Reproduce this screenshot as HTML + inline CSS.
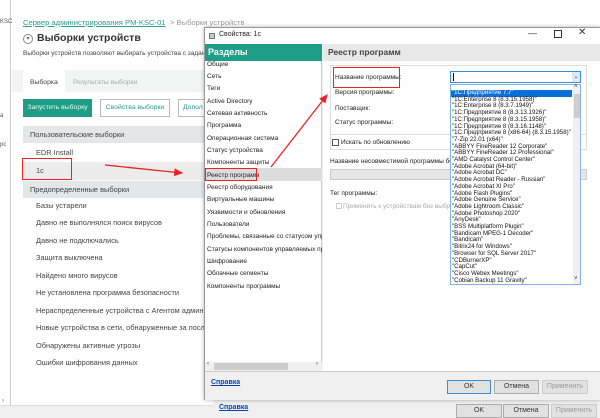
<!DOCTYPE html>
<html><head><meta charset="utf-8"><style>
*{margin:0;padding:0;box-sizing:border-box}
body{width:600px;height:418px;overflow:hidden;background:#fff;font-family:"Liberation Sans","Noto Sans CJK SC",sans-serif;position:relative;color:#333}
.a{position:absolute;white-space:nowrap}
.m{font-size:7.4px;color:#444}
.d{font-size:6.5px;color:#222}
.li{font-size:6.1px;color:#111;left:452px;height:6.7px;line-height:6.7px}
.btn{position:absolute;border:1px solid #adadad;background:#e1e1e1;font-size:7px;text-align:center;line-height:12px;height:14px}
</style></head><body>
<div class="a" style="left:0;top:0;width:11px;height:405px;border-right:1px solid #ccc;background:#fff"></div>
<div class="a" style="left:0;top:19px;font-size:6px;color:#555">KSC</div>
<div class="a" style="left:0;top:113px;font-size:6px;color:#555">а</div>
<div class="a" style="left:0;top:142px;font-size:6px;color:#555">рс</div>
<div class="a" style="left:2px;top:398px;font-size:6px;color:#555">›</div>
<div class="a" style="left:23px;top:18px;font-size:7.6px;color:#2a9d8f;text-decoration:underline">Сервер администрирования PM-KSC-01</div>
<div class="a" style="left:170px;top:18px;font-size:7.6px;color:#999">&gt; Выборки устройств</div>
<div class="a" style="left:23px;top:34px;width:10px;height:10px;border:1px solid #888;border-radius:50%;font-size:6px;text-align:center;line-height:8px;color:#666">▾</div>
<div class="a" style="left:37px;top:32px;font-size:10.5px;font-weight:bold;color:#333">Выборки устройств</div>
<div class="a" style="left:23px;top:50px;font-size:6.5px;color:#444">Выборки устройств позволяют выбирать устройства с задан</div>
<div class="a" style="left:12px;top:70px;width:192px;height:22px;background:#f2f4f4"></div>
<div class="a" style="left:23px;top:70px;width:42px;height:22px;background:#fff"></div>
<div class="a" style="left:30px;top:79px;font-size:6.8px;color:#444">Выборка</div>
<div class="a" style="left:73px;top:79px;font-size:6.8px;color:#aaa">Результаты выборки</div>
<div class="a" style="left:23px;top:99px;width:69px;height:18px;background:#1e9e87;color:#e9f7f3;font-size:6.8px;text-align:center;line-height:18px">Запустить выборку</div>
<div class="a" style="left:100px;top:99px;width:70px;height:18px;border:1px solid #bbb;color:#2a9d8f;font-size:6.8px;text-align:center;line-height:16px">Свойства выборки</div>
<div class="a" style="left:178px;top:99px;width:30px;height:18px;border:1px solid #bbb;color:#2a9d8f;font-size:6.8px;line-height:16px;padding-left:4px;overflow:hidden">Допол</div>
<div class="a" style="left:23px;top:126px;width:181px;height:17px;background:#e3e7e9"></div>
<div class="a m" style="left:30px;top:130px">Пользовательские выборки</div>
<div class="a m" style="left:36px;top:148px">EDR Install</div>
<div class="a" style="left:23px;top:162px;width:181px;height:18px;background:#ececec"></div>
<div class="a m" style="left:36px;top:166px">1c</div>
<div class="a" style="left:22px;top:158px;width:50px;height:22px;border:1.5px solid #e22"></div>
<div class="a" style="left:23px;top:181px;width:181px;height:17px;background:#e3e7e9"></div>
<div class="a m" style="left:30px;top:185px">Предопределенные выборки</div>
<div class="a m" style="left:36px;top:201px">Базы устарели</div>
<div class="a m" style="left:36px;top:218px">Давно не выполнялся поиск вирусов</div>
<div class="a m" style="left:36px;top:236px">Давно не подключались</div>
<div class="a m" style="left:36px;top:253px">Защита выключена</div>
<div class="a m" style="left:36px;top:271px">Найдено много вирусов</div>
<div class="a m" style="left:36px;top:288px">Не установлена программа безопасности</div>
<div class="a m" style="left:36px;top:306px">Нераспределенные устройства с Агентом админи</div>
<div class="a m" style="left:36px;top:323px">Новые устройства в сети, обнаруженные за после</div>
<div class="a m" style="left:36px;top:341px">Обнаружены активные угрозы</div>
<div class="a m" style="left:36px;top:358px">Ошибки шифрования данных</div>
<div class="a" style="left:0;top:405px;width:600px;height:13px;background:#f0f0f0;border-top:1px solid #ddd"></div>
<div class="a" style="left:213px;top:400px;width:387px;height:18px;background:#f0f0f0"></div>
<div class="a" style="left:219px;top:404px;font-size:7px;color:#0645ad;text-decoration:underline;font-weight:bold">Справка</div>
<div class="btn" style="left:456px;top:404px;width:46px">OK</div>
<div class="btn" style="left:503px;top:404px;width:46px">Отмена</div>
<div class="btn" style="left:551px;top:404px;width:46px;color:#999;border-color:#ccc">Применить</div>
<div class="a" style="left:204px;top:27px;width:396px;height:373px;background:#f0f0f0;border:1px solid #999;box-shadow:0 0 4px rgba(0,0,0,.3)"></div>
<div class="a" style="left:205px;top:28px;width:395px;height:16px;background:#fff"></div>
<div class="a" style="left:209px;top:33px;width:6px;height:6px;border:1px solid #777;background:#bcd"></div>
<div class="a" style="left:219px;top:31px;font-size:7px;color:#222">Свойства: 1с</div>
<div class="a" style="left:528px;top:28px;font-size:9px;color:#333">—</div>
<div class="a" style="left:554px;top:30px;width:8px;height:8px;border:1px solid #333"></div>
<div class="a" style="left:578px;top:27px;font-size:10px;color:#333">✕</div>
<div class="a" style="left:205px;top:44px;width:117px;height:327px;background:#fff;border-right:1px solid #ccc"></div>
<div class="a" style="left:205px;top:44px;width:117px;height:17px;background:#1e9e87;color:#fff;font-size:9px;font-weight:bold;line-height:17px;padding-left:3px">Разделы</div>
<div class="a" style="left:205px;top:168px;width:117px;height:13px;background:#dcdcdc"></div>
<div class="a d" style="left:207px;top:61px">Общие</div>
<div class="a d" style="left:207px;top:73px">Сеть</div>
<div class="a d" style="left:207px;top:85px">Теги</div>
<div class="a d" style="left:207px;top:98px">Active Directory</div>
<div class="a d" style="left:207px;top:110px">Сетевая активность</div>
<div class="a d" style="left:207px;top:122px">Программа</div>
<div class="a d" style="left:207px;top:135px">Операционная система</div>
<div class="a d" style="left:207px;top:147px">Статус устройства</div>
<div class="a d" style="left:207px;top:159px">Компоненты защиты</div>
<div class="a d" style="left:207px;top:172px">Реестр программ</div>
<div class="a" style="left:205px;top:168px;width:52px;height:13px;border:1.5px solid #e22"></div>
<div class="a d" style="left:207px;top:184px">Реестр оборудования</div>
<div class="a d" style="left:207px;top:196px">Виртуальные машины</div>
<div class="a d" style="left:207px;top:209px">Уязвимости и обновления</div>
<div class="a d" style="left:207px;top:221px">Пользователи</div>
<div class="a d" style="left:207px;top:233px;width:115px;overflow:hidden">Проблемы, связанные со статусом управле</div>
<div class="a d" style="left:207px;top:246px;width:115px;overflow:hidden">Статусы компонентов управляемых програ</div>
<div class="a d" style="left:207px;top:258px">Шифрование</div>
<div class="a d" style="left:207px;top:270px">Облачные сегменты</div>
<div class="a d" style="left:207px;top:283px">Компоненты программы</div>
<div class="a" style="left:205px;top:362px;width:117px;height:9px;background:#f0f0f0"></div>
<div class="a" style="left:214px;top:363px;width:74px;height:7px;background:#cdcdcd"></div>
<div class="a" style="left:207px;top:361px;font-size:6px">‹</div>
<div class="a" style="left:316px;top:361px;font-size:6px">›</div>
<div class="a" style="left:323px;top:44px;width:277px;height:327px;background:#fff"></div>
<div class="a" style="left:323px;top:44px;width:277px;height:17px;background:#e8e8e8;font-size:8.5px;font-weight:bold;color:#444;line-height:17px;padding-left:5px">Реестр программ</div>
<div class="a" style="left:330px;top:65px;width:257px;height:70px;border:1px solid #ddd"></div>
<div class="a d" style="left:335px;top:74px">Название программы:</div>
<div class="a" style="left:333px;top:67px;width:67px;height:21px;border:1.5px solid #e22"></div>
<div class="a d" style="left:335px;top:89px">Версия программы:</div>
<div class="a d" style="left:335px;top:105px">Поставщик:</div>
<div class="a d" style="left:335px;top:119px">Статус программы:</div>
<div class="a" style="left:330px;top:135px;width:257px;height:15px;border:1px solid #ddd;border-top:none"></div>
<div class="a" style="left:332px;top:139px;width:7px;height:7px;border:1px solid #555"></div>
<div class="a d" style="left:341px;top:139px">Искать по обновлению</div>
<div class="a d" style="left:330px;top:158px">Название несовместимой программы безопасн</div>
<div class="a" style="left:330px;top:169px;width:257px;height:11px;background:#e6e6e6;border:1px solid #ccc"></div>
<div class="a d" style="left:330px;top:190px">Тег программы:</div>
<div class="a" style="left:336px;top:203px;width:6px;height:6px;border:1px solid #ccc"></div>
<div class="a d" style="left:343px;top:203px;color:#aaa">Применить к устройствам без выбранн</div>
<div class="a" style="left:450px;top:71px;width:131px;height:12px;border:1px solid #3b8fd9;background:#fff"></div>
<div class="a" style="left:453px;top:73px;width:1px;height:8px;background:#000"></div>
<div class="a" style="left:572px;top:72px;width:8px;height:10px;background:#dde9f5;font-size:6px;text-align:center;line-height:10px;color:#333">⌄</div>
<div class="a" style="left:450px;top:84px;width:131px;height:201px;border:1px solid #7eb4ea;background:#fff;overflow:hidden"></div>
<div class="a" style="left:573px;top:85px;width:7px;height:199px;background:#f0f0f0"></div>
<div class="a" style="left:574px;top:94px;width:6px;height:24px;background:#cdcdcd"></div>
<div class="a" style="left:451px;top:90px;width:121px;height:6.7px;background:#0a6fd6"></div>
<div class="a li" style="top:90px;color:#fff">"1C:Предприятие 7.7"</div>
<div class="a li" style="top:96.7px">"1C:Enterprise 8 (8.3.15.1958)"</div>
<div class="a li" style="top:103.4px">"1C:Enterprise 8 (8.3.7.1949)"</div>
<div class="a li" style="top:110.1px">"1C:Предприятие 8 (8.3.13.1926)"</div>
<div class="a li" style="top:116.8px">"1C:Предприятие 8 (8.3.15.1958)"</div>
<div class="a li" style="top:123.5px">"1C:Предприятие 8 (8.3.16.1148)"</div>
<div class="a li" style="top:130.2px">"1C:Предприятие 8 (x86-64) (8.3.15.1958)"</div>
<div class="a li" style="top:136.9px">"7-Zip 22.01 (x64)"</div>
<div class="a li" style="top:143.6px">"ABBYY FineReader 12 Corporate"</div>
<div class="a li" style="top:150.3px">"ABBYY FineReader 12 Professional"</div>
<div class="a li" style="top:157px">"AMD Catalyst Control Center"</div>
<div class="a li" style="top:163.7px">"Adobe Acrobat (64-bit)"</div>
<div class="a li" style="top:170.4px">"Adobe Acrobat DC"</div>
<div class="a li" style="top:177.1px">"Adobe Acrobat Reader - Russian"</div>
<div class="a li" style="top:183.8px">"Adobe Acrobat XI Pro"</div>
<div class="a li" style="top:190.5px">"Adobe Flash Plugins"</div>
<div class="a li" style="top:197.2px">"Adobe Genuine Service"</div>
<div class="a li" style="top:203.9px">"Adobe Lightroom Classic"</div>
<div class="a li" style="top:210.6px">"Adobe Photoshop 2020"</div>
<div class="a li" style="top:217.3px">"AnyDesk"</div>
<div class="a li" style="top:224px">"BSS Multiplatform Plugin"</div>
<div class="a li" style="top:230.7px">"Bandicam MPEG-1 Decoder"</div>
<div class="a li" style="top:237.4px">"Bandicam"</div>
<div class="a li" style="top:244.1px">"Bitrix24 for Windows"</div>
<div class="a li" style="top:250.8px">"Browser for SQL Server 2017"</div>
<div class="a li" style="top:257.5px">"CDBurnerXP"</div>
<div class="a li" style="top:264.2px">"CapCut"</div>
<div class="a li" style="top:270.9px">"Cisco Webex Meetings"</div>
<div class="a li" style="top:277.6px">"Cobian Backup 11 Gravity"</div>
<div class="a" style="left:574px;top:84px;font-size:6px">˄</div>
<div class="a" style="left:574px;top:276px;font-size:6px">˅</div>
<div class="a" style="left:205px;top:371px;width:395px;height:29px;background:#f0f0f0;border-top:1px solid #ccc"></div>
<div class="a" style="left:211px;top:379px;font-size:7px;color:#0645ad;text-decoration:underline;font-weight:bold">Справка</div>
<div class="btn" style="left:447px;top:380px;width:44px;border:1px solid #3b8fd9">OK</div>
<div class="btn" style="left:494px;top:380px;width:45px">Отмена</div>
<div class="btn" style="left:542px;top:380px;width:46px;color:#999;border-color:#ccc">Применить</div>
<svg class="a" style="left:0;top:0" width="600" height="418">
<defs><marker id="h" markerWidth="8" markerHeight="8" refX="6" refY="3" orient="auto"><path d="M0,0 L7,3 L0,6 z" fill="#e22"/></marker></defs>
<line x1="105" y1="165" x2="182" y2="173" stroke="#e22" stroke-width="1.3" marker-end="url(#h)"/>
<line x1="271" y1="167" x2="327" y2="95" stroke="#e22" stroke-width="1.3" marker-end="url(#h)"/>
</svg>
</body></html>
